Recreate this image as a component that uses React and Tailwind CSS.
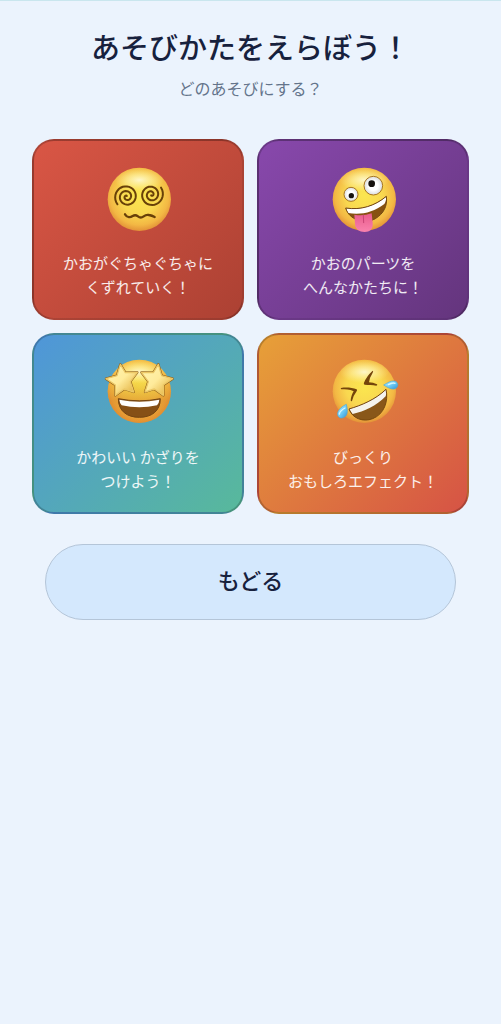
import React from "react";
import { clsx } from "clsx";

// Archimedean spiral from the centre outwards, counterclockwise on screen
function spiralPath(cx, cy, radius, turns, endAngle) {
  const steps = 72;
  let d = "";
  for (let i = 0; i <= steps; i++) {
    const t = i / steps;
    const angle = endAngle + (1 - t) * turns * Math.PI * 2;
    const r = 2 + (radius - 2) * t;
    const x = (cx + Math.cos(angle) * r).toFixed(1);
    const y = (cy + Math.sin(angle) * r).toFixed(1);
    d += `${i === 0 ? "M" : "L"}${x} ${y}`;
  }
  return d;
}

function Face({ id, viewBox, label, children }) {
  return (
    <svg viewBox={viewBox} className="h-20 w-20" role="img" aria-label={label}>
      <defs>
        <radialGradient id={`${id}-skin`} cx="0.5" cy="0.44" r="0.58">
          <stop offset="0" stopColor="#fbe64f" />
          <stop offset="0.5" stopColor="#f9d850" />
          <stop offset="0.8" stopColor="#f3b844" />
          <stop offset="1" stopColor="#e08a35" />
        </radialGradient>
        <radialGradient id={`${id}-shine`}>
          <stop offset="0" stopColor="#fffbe0" stopOpacity="0.85" />
          <stop offset="0.5" stopColor="#fff6b8" stopOpacity="0.5" />
          <stop offset="1" stopColor="#fff2a0" stopOpacity="0" />
        </radialGradient>
      </defs>
      <circle cx="118" cy="118" r="95" fill={`url(#${id}-skin)`} />
      <ellipse cx="118" cy="60" rx="74" ry="34" fill={`url(#${id}-shine)`} />
      {children}
    </svg>
  );
}

function DizzyFace() {
  return (
    <Face id="dizzy" viewBox="-6 0 240 240" label="ぐるぐるのかお">
      <g fill="none" stroke="#684008" strokeWidth="6" strokeLinecap="round">
        <path d={spiralPath(80, 110, 36, 2.4, Math.PI * 0.78)} />
        <path d={spiralPath(154, 104, 36, 2.4, Math.PI * -0.2)} />
        <path d="M75 163 C82 174 91 173 98 168 Q106 163 114 169 Q122 176 131 169 Q139 163 147 165 Q156 167 164 171" strokeWidth="7" />
      </g>
    </Face>
  );
}

function ZanyFace() {
  return (
    <Face id="zany" viewBox="-6 0 240 240" label="べろをだしたかお">
      <defs>
        <radialGradient id="zany-eye">
          <stop offset="0.5" stopColor="#ffffff" />
          <stop offset="1" stopColor="#d9dcdc" />
        </radialGradient>
        <linearGradient id="zany-tongue" x1="0" y1="0" x2="0" y2="1">
          <stop offset="0" stopColor="#e85c8b" />
          <stop offset="1" stopColor="#fa82ae" />
        </linearGradient>
      </defs>
      <circle cx="78" cy="103" r="21" fill="url(#zany-eye)" stroke="#a8751f" strokeWidth="3" />
      <circle cx="145" cy="77" r="28" fill="url(#zany-eye)" stroke="#a8751f" strokeWidth="3" />
      <circle cx="79" cy="107" r="8" fill="#15110e" />
      <circle cx="140" cy="71" r="10" fill="#15110e" />
      <path d="M62 144 C108 151 149 138 184 109 C188 138 176 161 151 176 C119 194 72 180 62 144Z" fill="#865110" />
      <path d="M63 145 C108 151 149 138 183 110 C184 119 182 126 178 132 C145 157 108 166 69 159Z" fill="#fff" />
      <path d="M62 144 C108 151 149 138 184 109 C188 138 176 161 151 176 C119 194 72 180 62 144Z" fill="none" stroke="#714611" strokeWidth="3" strokeLinejoin="round" />
      <path d="M88 164 Q114 169 140 160 L143 189 C145 207 134 216 119 216 C103 216 91 208 90 192Z" fill="url(#zany-tongue)" />
      <path d="M115 165 L116 188" stroke="#c94475" strokeWidth="3" strokeLinecap="round" />
    </Face>
  );
}

function StarFace() {
  return (
    <Face id="star" viewBox="-6 6 240 240" label="ほしのめのかお">
      <defs>
        <linearGradient id="star-fill" x1="0" y1="0" x2="1" y2="1">
          <stop offset="0" stopColor="#fff6b4" />
          <stop offset="0.5" stopColor="#ffeb9b" />
          <stop offset="1" stopColor="#dda52d" />
        </linearGradient>
        <linearGradient id="star-shade" x1="0" y1="0" x2="0" y2="1">
          <stop offset="0.3" stopColor="#c56f16" stopOpacity="0" />
          <stop offset="0.65" stopColor="#d47722" stopOpacity="0.5" />
          <stop offset="1" stopColor="#e08a26" stopOpacity="0.4" />
        </linearGradient>
      </defs>
      <circle cx="118" cy="118" r="95" fill="url(#star-shade)" />
      <path d="M55 140 Q118 153 181 140 C181 178 154 196 118 196 C82 196 55 178 55 140Z" fill="#865016" stroke="#744513" strokeWidth="3" />
      <path d="M58 143 Q118 155 178 143 Q177 155 171 160 Q118 172 65 160 Q59 154 58 143Z" fill="#fff" />
      <g stroke="#8a5a18" strokeWidth="7" strokeLinejoin="round">
        <path d="M61 37 L76 62 L112 61 L91 89 L101 120 L73 111 L46 130 L46 99 L18 80 L51 71Z" />
        <path d="M175 37 L185 71 L218 80 L190 99 L190 130 L163 111 L135 120 L145 89 L124 61 L160 62Z" />
      </g>
      <g fill="url(#star-fill)" stroke="#ecc866" strokeWidth="4" strokeLinejoin="round">
        <path d="M61 37 L76 62 L112 61 L91 89 L101 120 L73 111 L46 130 L46 99 L18 80 L51 71Z" />
        <path d="M175 37 L185 71 L218 80 L190 99 L190 130 L163 111 L135 120 L145 89 L124 61 L160 62Z" />
      </g>
    </Face>
  );
}

function LaughingFace() {
  return (
    <Face id="laugh" viewBox="-6 6 240 240" label="おおわらいのかお">
      <defs>
        <linearGradient id="laugh-tear" x1="0" y1="0" x2="1" y2="1">
          <stop offset="0" stopColor="#b9eeff" />
          <stop offset="0.5" stopColor="#70cdf6" />
          <stop offset="1" stopColor="#3594d5" />
        </linearGradient>
      </defs>
      <g fill="#74450b">
        <path d="M48 108 C64 105 81 107 95 112 Q98 115 94 119 Q85 130 81 147 Q78 149 77 145 C78 134 81 126 86 118 C74 112 60 112 49 112 Q46 110 48 108Z" />
        <path d="M143 56 Q146 58 143 62 Q134 76 132 91 Q144 91 156 97 Q159 100 154 101 C142 99 131 99 119 98 Q115 97 117 92 Q125 72 143 56Z" />
      </g>
      <path d="M72 171 C109 160 151 143 183 112 C191 148 177 187 143 200 C115 211 82 200 72 171Z" fill="#895719" />
      <path d="M72 171 C109 160 151 143 183 112 Q186 123 182 133 C153 163 119 178 83 186Z" fill="#f5f3ed" />
      <path d="M72 171 C109 160 151 143 183 112 C191 148 177 187 143 200 C115 211 82 200 72 171Z" fill="none" stroke="#75460e" strokeWidth="3" strokeLinejoin="round" />
      <path d="M176 99 C187 93 197 86 207 87 C218 88 222 99 215 107 C204 117 187 106 176 99Z" fill="url(#laugh-tear)" stroke="#4ca8d5" strokeWidth="2" />
      <path d="M64 157 C53 162 40 172 38 183 C36 195 47 202 57 196 C71 189 67 171 64 157Z" fill="url(#laugh-tear)" stroke="#4ca8d5" strokeWidth="2" />
      <path d="M190 98 Q202 91 210 94 M60 168 Q45 176 43 186" fill="none" stroke="#d6f7ff" strokeWidth="4" strokeLinecap="round" />
    </Face>
  );
}

const games = [
  {
    id: "melt",
    Icon: DizzyFace,
    lines: ["かおがぐちゃぐちゃに", "くずれていく！"],
    color: "bg-[linear-gradient(135deg,#d95645,#ac4133)]",
  },
  {
    id: "parts",
    Icon: ZanyFace,
    lines: ["かおのパーツを", "へんなかたちに！"],
    color: "bg-[linear-gradient(135deg,#8848ac,#64357d)]",
  },
  {
    id: "decorate",
    Icon: StarFace,
    lines: ["かわいい かざりを", "つけよう！"],
    color: "bg-[linear-gradient(135deg,#4f96d9,#58b99b)]",
  },
  {
    id: "effects",
    Icon: LaughingFace,
    lines: ["びっくり", "おもしろエフェクト！"],
    color: "bg-[linear-gradient(135deg,#e7a038,#d65345)]",
  },
];

function GameCard({ game }) {
  const { Icon, lines, color } = game;

  return (
    <button
      type="button"
      className={clsx(
        "flex flex-col items-center rounded-[22px] border-2 border-black/20 px-2 pt-[19px] pb-[19px]",
        color
      )}
    >
      <Icon />
      <span className="mt-[11px] text-[15px] leading-6 text-white/90">
        {lines.map((line) => (
          <span key={line} className="block whitespace-nowrap">
            {line}
          </span>
        ))}
      </span>
    </button>
  );
}

export default function App() {
  return (
    <div
      lang="ja"
      className="min-h-screen border-t border-[#c9e6ee] bg-[#ebf3fd] px-8 pt-[27px] pb-8 font-['Noto_Sans_CJK_JP',sans-serif]"
    >
      <header className="text-center">
        <h1 className="text-[29px] leading-9 font-medium text-[#17213d]">
          あそびかたをえらぼう！
        </h1>
        <p className="mt-3 text-base leading-6 text-[#64748b]">
          どのあそびにする？
        </p>
      </header>

      {/* Game list */}
      <main className="mt-[39px]">
        <div className="grid grid-cols-2 gap-[13px]">
          {games.map((game) => (
            <GameCard key={game.id} game={game} />
          ))}
        </div>

        <div className="mt-[30px] px-[13px]">
          <button
            type="button"
            className="w-full rounded-full border border-[#b4c5d8] bg-[#d4e8fd] pt-[17px] pb-[23px] text-[22px] leading-[34px] font-medium text-[#17213d]"
          >
            もどる
          </button>
        </div>
      </main>
    </div>
  );
}
